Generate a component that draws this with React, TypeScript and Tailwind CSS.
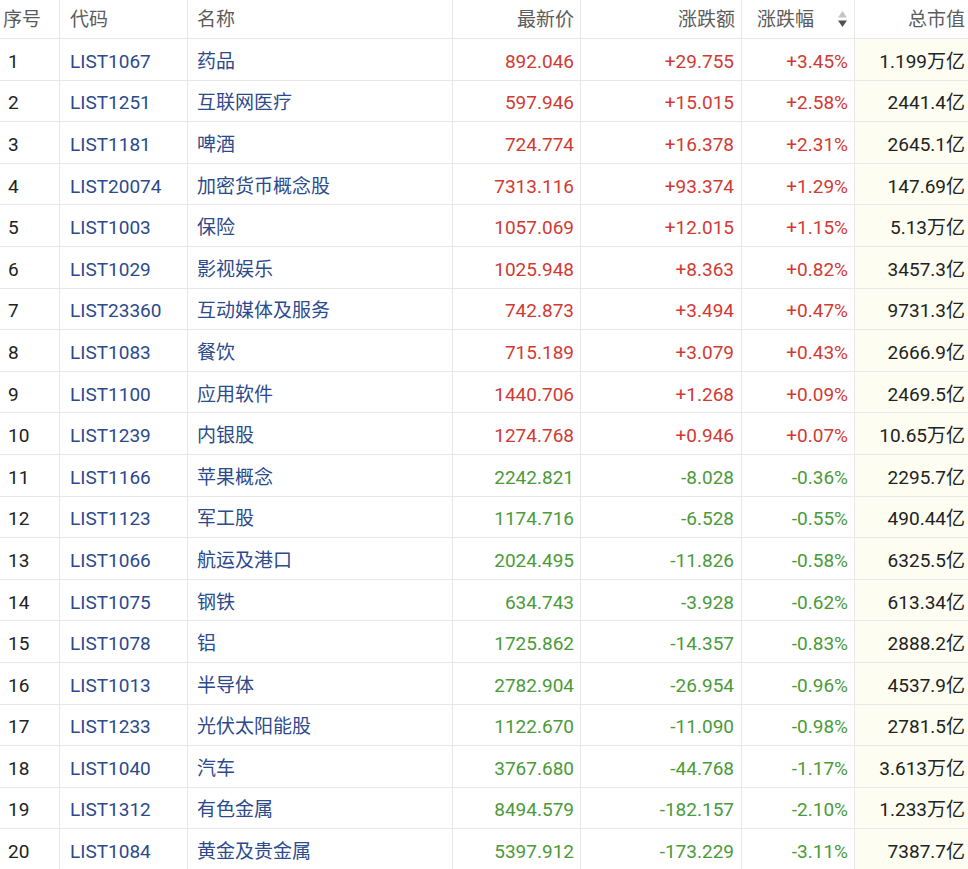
import React from 'react';

type Row = [string, string, string, string, string, string];

const rows: Row[] = [
  ['LIST1067', '药品', '892.046', '+29.755', '+3.45%', '1.199万亿'],
  ['LIST1251', '互联网医疗', '597.946', '+15.015', '+2.58%', '2441.4亿'],
  ['LIST1181', '啤酒', '724.774', '+16.378', '+2.31%', '2645.1亿'],
  ['LIST20074', '加密货币概念股', '7313.116', '+93.374', '+1.29%', '147.69亿'],
  ['LIST1003', '保险', '1057.069', '+12.015', '+1.15%', '5.13万亿'],
  ['LIST1029', '影视娱乐', '1025.948', '+8.363', '+0.82%', '3457.3亿'],
  ['LIST23360', '互动媒体及服务', '742.873', '+3.494', '+0.47%', '9731.3亿'],
  ['LIST1083', '餐饮', '715.189', '+3.079', '+0.43%', '2666.9亿'],
  ['LIST1100', '应用软件', '1440.706', '+1.268', '+0.09%', '2469.5亿'],
  ['LIST1239', '内银股', '1274.768', '+0.946', '+0.07%', '10.65万亿'],
  ['LIST1166', '苹果概念', '2242.821', '-8.028', '-0.36%', '2295.7亿'],
  ['LIST1123', '军工股', '1174.716', '-6.528', '-0.55%', '490.44亿'],
  ['LIST1066', '航运及港口', '2024.495', '-11.826', '-0.58%', '6325.5亿'],
  ['LIST1075', '钢铁', '634.743', '-3.928', '-0.62%', '613.34亿'],
  ['LIST1078', '铝', '1725.862', '-14.357', '-0.83%', '2888.2亿'],
  ['LIST1013', '半导体', '2782.904', '-26.954', '-0.96%', '4537.9亿'],
  ['LIST1233', '光伏太阳能股', '1122.670', '-11.090', '-0.98%', '2781.5亿'],
  ['LIST1040', '汽车', '3767.680', '-44.768', '-1.17%', '3.613万亿'],
  ['LIST1312', '有色金属', '8494.579', '-182.157', '-2.10%', '1.233万亿'],
  ['LIST1084', '黄金及贵金属', '5397.912', '-173.229', '-3.11%', '7387.7亿'],
];

const SortIcon: React.FC = () => (
  <svg width="11" height="20" viewBox="0 0 11 20" className="ml-auto mr-[6px]">
    <path d="M5.5 2 L10 8.5 L1 8.5 Z" fill="#c4c4c4" />
    <path d="M1 11.5 L10 11.5 L5.5 18 Z" fill="#4f4f4f" />
  </svg>
);

const App: React.FC = () => {
  return (
    <div
      className="w-[968px] h-[869px] overflow-hidden bg-white text-[19px] leading-none"
      style={{ fontFamily: 'Roboto, "Noto Sans CJK SC", sans-serif' }}
    >
      <div className="flex h-[39px] border-b border-[#e8e8e8] text-[#5c5c5c]">
        <div className="w-[60px] shrink-0 border-r border-[#e8e8e8] flex items-center pl-[3px]">序号</div>
        <div className="w-[128px] shrink-0 border-r border-[#e8e8e8] flex items-center pl-[10px]">代码</div>
        <div className="w-[265px] shrink-0 border-r border-[#e8e8e8] flex items-center pl-[9px]">名称</div>
        <div className="w-[128px] shrink-0 border-r border-[#e8e8e8] flex items-center justify-end pr-[6px]">最新价</div>
        <div className="w-[161px] shrink-0 border-r border-[#e8e8e8] flex items-center justify-end pr-[6px]">涨跌额</div>
        <div className="w-[113px] shrink-0 border-r border-[#e8e8e8] flex items-center pl-[15px]">
          涨跌幅
          <SortIcon />
        </div>
        <div className="flex-1 flex items-center justify-end pr-[3px]">总市值</div>
      </div>
      {rows.map((r, i) => {
        const up = r[3].startsWith('+');
        const color = up ? 'text-[#d13a33]' : 'text-[#4b9a3a]';
        return (
          <div key={r[0]} className="flex h-[41.6px] border-b border-[#e8e8e8]">
            <div className="w-[60px] shrink-0 border-r border-[#e8e8e8] flex items-center pt-[4px] pl-[8px] text-[#222]">{i + 1}</div>
            <div className="w-[128px] shrink-0 border-r border-[#e8e8e8] flex items-center pt-[4px] pl-[10px] text-[#2c4a8c]">{r[0]}</div>
            <div className="w-[265px] shrink-0 border-r border-[#e8e8e8] flex items-center pt-[4px] pl-[9px] text-[#2c4a8c]">{r[1]}</div>
            <div className={`w-[128px] shrink-0 border-r border-[#e8e8e8] flex items-center justify-end pt-[4px] pr-[6px] ${color}`}>{r[2]}</div>
            <div className={`w-[161px] shrink-0 border-r border-[#e8e8e8] flex items-center justify-end pt-[4px] pr-[7px] ${color}`}>{r[3]}</div>
            <div className={`w-[113px] shrink-0 border-r border-[#e8e8e8] flex items-center justify-end pt-[4px] pr-[6px] ${color}`}>{r[4]}</div>
            <div className="flex-1 flex items-center justify-end pt-[4px] pr-[3px] bg-[#fdfdf1] text-[#222]">{r[5]}</div>
          </div>
        );
      })}
    </div>
  );
};

export default App;
